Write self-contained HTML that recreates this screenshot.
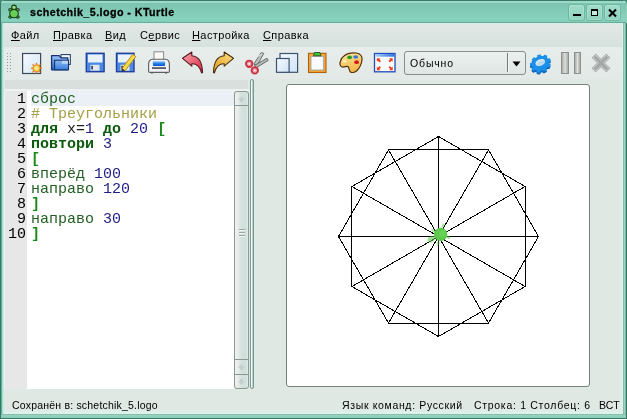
<!DOCTYPE html>
<html><head><meta charset="utf-8">
<style>
*{margin:0;padding:0;box-sizing:border-box}
html,body{width:627px;height:419px;overflow:hidden;background:#3f8673}
body{position:relative;font-family:"Liberation Sans",sans-serif;-webkit-font-smoothing:antialiased}
.abs{position:absolute}
.menu,.ttl,.code,.st,.tx{will-change:transform}
svg{position:absolute;overflow:visible}
#frame{left:0;top:0;width:627px;height:419px;background:linear-gradient(90deg,#3a7666 0,#3a7666 1px,#5cb09a 1px,#5cb09a 2px,#a6e2cf 2px,#a6e2cf 3px,#c4ecde 3px,#c4ecde 4px,transparent 4px),#8fd1bc;border-radius:5px 5px 0 0}
#title{left:1px;top:0;width:625px;height:23px;border-radius:4px 4px 0 0;background:linear-gradient(#3c7a6a 0,#3c7a6a 1px,#9dd9c7 1px,#9dd9c7 3px,#7dc4b0 3px,#80c8b4 8px,#88d3bf 20px,#84cfbb 20px,#84cfbb 22px,#6ea999 22px)}
#rb{left:619px;top:23px;width:8px;height:396px;background:linear-gradient(90deg,#e0e9e5 0,#dcf1ea 3px,#d8f5eb 3px,#d8f5eb 4px,#8fb9aa 4px,#8fb9aa 5px,#97d7c3 5px,#97d7c3 6px,#7ab9a5 6px,#7ab9a5 7px,#3a7262 7px)}
#bb{left:4px;top:410px;width:619px;height:4px;background:linear-gradient(#e0eae6 0,#dcf0e9 2px,#d8f5eb 3px,#d8f5eb 4px)}
#bb2{left:1px;top:414px;width:625px;height:5px;background:linear-gradient(#8fb9aa 0,#8fb9aa 1px,#94d6c2 1px,#88cbb6 4px,#3a7262 4px)}
#client{left:4px;top:23px;width:618px;height:390px;background:#e0e8e4}
.ttl{left:30px;top:6px;font-size:10.7px;font-weight:bold;color:#000;letter-spacing:0.45px;-webkit-text-stroke:0.3px #000;white-space:pre;line-height:12px}
.menu{top:29px;font-size:11px;color:#000;white-space:pre;letter-spacing:0.4px;line-height:12px}
.menu i{font-style:normal;text-decoration:underline;text-decoration-thickness:1px;text-underline-offset:0.5px}
.wbtn{top:4px;width:17px;height:17px;border:1px solid #70b7a1;border-radius:3px;background:linear-gradient(#a0dccb,#8ed3be);box-shadow:inset 0 0 0 1px rgba(255,255,255,0.18)}
.code{font-family:"Liberation Mono",monospace;font-size:15px;letter-spacing:0;white-space:pre;line-height:15px}
.ln{position:absolute;left:0;width:26px;text-align:right;color:#000}
.st{top:399px;font-size:10.5px;color:#000;white-space:pre;letter-spacing:0.2px;line-height:12px}
</style></head><body>
<div id="frame" class="abs"></div>
<div id="title" class="abs"></div>
<div id="client" class="abs"></div>
<div id="rb" class="abs"></div>
<div id="bb" class="abs"></div>
<div id="bb2" class="abs"></div>
<div class="abs" style="left:4px;top:23px;width:618px;height:24px;background:linear-gradient(#d2efe6 0,#d2efe6 1px,#e2e8e5 1px,#d6e1dd 24px)"></div>
<div class="abs" style="left:4px;top:47px;width:618px;height:32px;background:linear-gradient(#e6edea,#e2e9e6)"></div>
<!-- TITLE -->
<svg style="left:8px;top:4px" width="13" height="16" viewBox="0 0 13 16">
 <g fill="#5fc44e" stroke="#173f17" stroke-width="1.1">
  <ellipse cx="2.2" cy="5.8" rx="1.5" ry="1.2" fill="#a8e49a"/>
  <ellipse cx="9.8" cy="5.8" rx="1.5" ry="1.2" fill="#a8e49a"/>
  <ellipse cx="2.2" cy="13" rx="1.4" ry="1.1"/>
  <ellipse cx="9.8" cy="13" rx="1.4" ry="1.1"/>
  <circle cx="6" cy="3.4" r="2.3" fill="#9de08c"/>
  <ellipse cx="6" cy="9.6" rx="4.3" ry="4.2"/>
 </g>
 <ellipse cx="6" cy="9.8" rx="3.3" ry="3.2" fill="#66cf55"/>
</svg>
<div class="abs ttl">schetchik_5.logo - KTurtle</div>
<div class="abs wbtn" style="left:568px"></div>
<div class="abs wbtn" style="left:586px"></div>
<div class="abs wbtn" style="left:604px"></div>
<div class="abs" style="left:573px;top:14px;width:8px;height:2px;background:#000"></div>
<div class="abs" style="left:591px;top:9px;width:7px;height:7px;border:1px solid #000;border-top-width:2px;background:#c8e8dc"></div>
<svg style="left:608px;top:9px" width="9" height="8" viewBox="0 0 9 8"><path d="M1 0.5L8 7.5M8 0.5L1 7.5" stroke="#000" stroke-width="2.1"/></svg>
<!-- MENU -->
<div class="abs menu" style="left:11px"><i>Ф</i>айл</div>
<div class="abs menu" style="left:53px"><i>П</i>равка</div>
<div class="abs menu" style="left:105px"><i>В</i>ид</div>
<div class="abs menu" style="left:140px">С<i>е</i>рвис</div>
<div class="abs menu" style="left:192px"><i>Н</i>астройка</div>
<div class="abs menu" style="left:263px"><i>С</i>правка</div>
<!-- TOOLBAR -->
<svg style="left:6px;top:52px" width="6" height="21" viewBox="0 0 6 21" fill="#8e9a95">
 <rect x="1" y="1" width="1" height="1"/><rect x="4" y="1" width="1" height="1"/>
 <rect x="1" y="4" width="1" height="1"/><rect x="4" y="4" width="1" height="1"/>
 <rect x="1" y="7" width="1" height="1"/><rect x="4" y="7" width="1" height="1"/>
 <rect x="1" y="10" width="1" height="1"/><rect x="4" y="10" width="1" height="1"/>
 <rect x="1" y="13" width="1" height="1"/><rect x="4" y="13" width="1" height="1"/>
 <rect x="1" y="16" width="1" height="1"/><rect x="4" y="16" width="1" height="1"/>
 <rect x="1" y="19" width="1" height="1"/><rect x="4" y="19" width="1" height="1"/>
</svg>
<!-- new -->
<svg style="left:20px;top:50px" width="24" height="26" viewBox="0 0 24 26">
 <defs><linearGradient id="gpage" x1="0" y1="0" x2="1" y2="1"><stop offset="0" stop-color="#f8fbfe"/><stop offset="1" stop-color="#d2e4f4"/></linearGradient></defs>
 <rect x="2.6" y="3.5" width="18" height="20" fill="url(#gpage)" stroke="#3b4a5c" stroke-width="1.2"/>
 <g transform="translate(16.5 18.3)">
  <path d="M0,-5.5L1.2,-2.6L3.9,-3.9L2.8,-1.1L5.5,0L2.8,1.1L3.9,3.9L1.2,2.6L0,5.5L-1.2,2.6L-3.9,3.9L-2.8,1.1L-5.5,0L-2.8,-1.1L-3.9,-3.9L-1.2,-2.6Z" fill="#f0a020" stroke="#d86a10" stroke-width="0.6"/>
  <circle r="2.7" fill="#fcd85a"/>
  <circle r="1.3" fill="#fff2b0"/>
 </g>
</svg>
<!-- open -->
<svg style="left:50px;top:52px" width="22" height="20" viewBox="0 0 22 20">
 <defs><linearGradient id="gfold" x1="0" y1="0" x2="0" y2="1"><stop offset="0" stop-color="#9cc6f4"/><stop offset="1" stop-color="#2a62c8"/></linearGradient>
 <linearGradient id="gfold2" x1="0" y1="0" x2="0" y2="1"><stop offset="0" stop-color="#8ab8f0"/><stop offset="1" stop-color="#3a7ee0"/></linearGradient></defs>
 <rect x="11" y="2.6" width="9.3" height="9.8" fill="#f4f8fc" stroke="#1d3460" stroke-width="1"/>
 <path d="M1.6 3.6H9.2L11 5.8H17.8V17.8H1.6Z" fill="url(#gfold)" stroke="#163470" stroke-width="1.3" stroke-linejoin="round"/>
 <path d="M4.6 8.3H18.5V17.8H4.6Z" fill="url(#gfold2)" stroke="#163470" stroke-width="1.1"/>
 <rect x="12" y="8.8" width="6" height="3" fill="#c8dcf4" opacity="0.8"/>
</svg>
<!-- save -->
<svg style="left:84px;top:51px" width="22" height="22" viewBox="0 0 22 22">
 <rect x="2.3" y="2.3" width="17.8" height="18.4" fill="#4c8ae2" stroke="#213f9c" stroke-width="1.4"/>
 <rect x="4" y="3.5" width="14.5" height="8" fill="#e9f2fb"/>
 <rect x="6.5" y="13.8" width="9" height="5.8" fill="#e4e8ee"/>
 <rect x="7.3" y="14.8" width="1.6" height="3.6" fill="#2a3450"/>
</svg>
<!-- save as -->
<svg style="left:114px;top:51px" width="24" height="22" viewBox="0 0 24 22">
 <rect x="2.5" y="2.3" width="17.5" height="18.4" fill="#4c8ae2" stroke="#213f9c" stroke-width="1.4"/>
 <rect x="4" y="3.5" width="14.5" height="8" fill="#e9f2fb"/>
 <rect x="6.5" y="13.8" width="9" height="5.8" fill="#e4e8ee"/>
 <rect x="7.3" y="14.8" width="1.6" height="3.6" fill="#2a3450"/>
 <path d="M8 17.5L18.8 3.2L21.8 5.6L11 19.8Z" fill="#f2dc4a" stroke="#b88418" stroke-width="1"/>
 <path d="M8 17.5L7.3 20.5L11 19.8Z" fill="#2a3050"/>
</svg>
<!-- print -->
<svg style="left:146px;top:50px" width="26" height="26" viewBox="0 0 26 26">
 <defs><linearGradient id="gpb" x1="0" y1="0" x2="0" y2="1"><stop offset="0" stop-color="#8cc4fa"/><stop offset="0.45" stop-color="#2a86f0"/><stop offset="1" stop-color="#0a50c8"/></linearGradient></defs>
 <rect x="8" y="1.8" width="9.6" height="9.5" fill="#fbfbf6" stroke="#858a90" stroke-width="1"/>
 <path d="M6.5 9.3H19.5Q23.2 9.6 23.4 14V21Q23.4 22.4 22 22.4H4Q2.6 22.4 2.6 21V14Q2.8 9.6 6.5 9.3Z" fill="#f2f2f6" stroke="#5a5e64" stroke-width="1.1"/>
 <path d="M7 11.3H19Q19.5 14 18.8 16H7.2Q6.5 14 7 11.3Z" fill="url(#gpb)"/>
 <rect x="6" y="17.3" width="14" height="1.5" fill="#3a3e44"/>
 <rect x="5.3" y="22" width="1.3" height="1.8" fill="#5a5e64"/><rect x="19.4" y="22" width="1.3" height="1.8" fill="#5a5e64"/>
</svg>
<!-- undo -->
<svg style="left:181px;top:50px" width="24" height="25" viewBox="0 0 24 25">
 <defs><linearGradient id="gund" x1="0" y1="0" x2="1" y2="1"><stop offset="0" stop-color="#f7a8b0"/><stop offset="1" stop-color="#d8243a"/></linearGradient></defs>
 <path d="M1.5 8.3L10.8 2V5.8C17 6.3 21.3 12 21.5 22.5L20.7 23C19 17 15.5 13.5 10.8 13.8V16.2Z" fill="url(#gund)" stroke="#5a1a22" stroke-width="1.1" stroke-linejoin="round"/>
</svg>
<!-- redo -->
<svg style="left:211px;top:50px" width="24" height="25" viewBox="0 0 24 25">
 <defs><linearGradient id="gred" x1="1" y1="0" x2="0" y2="1"><stop offset="0" stop-color="#fbe08a"/><stop offset="1" stop-color="#e49a14"/></linearGradient></defs>
 <path d="M22.5 8.3L13.2 2V5.8C7 6.3 2.7 12 2.5 22.5L3.3 23C5 17 8.5 13.5 13.2 13.8V16.2Z" fill="url(#gred)" stroke="#4a3010" stroke-width="1.1" stroke-linejoin="round"/>
</svg>
<!-- cut -->
<svg style="left:244px;top:50px" width="26" height="25" viewBox="0 0 26 25">
 <path d="M9.8 14.2L17.2 2.6L19.8 3.4L13.2 15.2Z" fill="#bfc4c3" stroke="#5e6462" stroke-width="0.9" stroke-linejoin="round"/>
 <path d="M10.5 15.5L23 8.2L24.2 10.4L12.5 17.5Z" fill="#b4b9b8" stroke="#5e6462" stroke-width="0.9" stroke-linejoin="round"/>
 <path d="M14.2 6.5L18 3.8" stroke="#f4f6f6" stroke-width="0.8"/>
 <circle cx="5.2" cy="13.8" r="3.2" fill="#f0a0aa" stroke="#c83444" stroke-width="1.9"/>
 <circle cx="10.8" cy="20.4" r="3.2" fill="#f0a0aa" stroke="#c83444" stroke-width="1.9"/>
 <circle cx="5.2" cy="13.8" r="0.9" fill="#fff"/><circle cx="10.8" cy="20.4" r="0.9" fill="#fff"/>
</svg>
<!-- copy -->
<svg style="left:275px;top:51px" width="24" height="23" viewBox="0 0 24 23">
 <defs><linearGradient id="gcp" x1="0" y1="0" x2="1" y2="1"><stop offset="0" stop-color="#f5fafe"/><stop offset="1" stop-color="#cfe3f5"/></linearGradient></defs>
 <rect x="5" y="2.5" width="17.6" height="18.8" fill="url(#gcp)" stroke="#3d5372" stroke-width="1.2"/>
 <rect x="1.5" y="7.5" width="12.6" height="13.8" fill="url(#gcp)" stroke="#3d5372" stroke-width="1.2"/>
</svg>
<!-- paste -->
<svg style="left:306px;top:50px" width="22" height="25" viewBox="0 0 22 25">
 <rect x="2.5" y="3.3" width="17.5" height="19.2" fill="#f5a63a" stroke="#b0620e" stroke-width="1.1"/>
 <rect x="5" y="6.5" width="12.5" height="13.5" fill="#f8fafe" stroke="#9aa2aa" stroke-width="0.8"/>
 <path d="M7.5 5.8L8.5 2.5H14L15 5.8Z" fill="#44c044" stroke="#1c5a1c" stroke-width="0.9"/>
</svg>
<!-- palette -->
<svg style="left:338px;top:51px" width="26" height="24" viewBox="0 0 26 24">
 <defs><linearGradient id="gpal" x1="0" y1="0" x2="0.3" y2="1"><stop offset="0" stop-color="#fde7a0"/><stop offset="1" stop-color="#f2b848"/></linearGradient></defs>
 <path d="M6 5C9 2.5 14 1.5 18 2C22 2.5 24.5 5 24 9C23.5 13 21.5 17 19 19.5C17 21.5 14 22 12.5 21C11 20 11.5 17 10 15.5C8.5 14.8 6.5 16.5 4.2 16C1.8 15.3 1.5 12.5 2.5 10C3 8 4.5 6 6 5Z" fill="url(#gpal)" stroke="#56300c" stroke-width="1.2"/>
 <ellipse cx="11.6" cy="6.4" rx="2.5" ry="1.8" fill="#28a028"/>
 <ellipse cx="17.7" cy="6" rx="2.5" ry="1.8" fill="#3c78d0"/>
 <ellipse cx="18.6" cy="11.2" rx="2.4" ry="1.9" fill="#d81818"/>
 <ellipse cx="6.6" cy="10.2" rx="1.7" ry="1.3" fill="#fff0c0"/>
</svg>
<!-- fullscreen -->
<svg style="left:372px;top:51px" width="26" height="23" viewBox="0 0 26 23">
 <defs><linearGradient id="gfs" x1="0" y1="0" x2="1" y2="0"><stop offset="0" stop-color="#a8d0f8"/><stop offset="1" stop-color="#2a6ee0"/></linearGradient></defs>
 <rect x="2.5" y="2.5" width="20.5" height="18.3" fill="#fbfdff" stroke="#1e4cb8" stroke-width="1.3"/>
 <rect x="3.1" y="3.1" width="19.3" height="2.6" fill="url(#gfs)"/>
 <g fill="#e8401c"><path d="M4.80 7.20L8.40 7.20L7.32 8.28L8.98 9.94L7.54 11.38L5.88 9.72L4.80 10.80Z"/><path d="M20.70 7.20L17.10 7.20L18.18 8.28L16.52 9.94L17.96 11.38L19.62 9.72L20.70 10.80Z"/><path d="M4.80 19.20L8.40 19.20L7.32 18.12L8.98 16.46L7.54 15.02L5.88 16.68L4.80 15.60Z"/><path d="M20.70 19.20L17.10 19.20L18.18 18.12L16.52 16.46L17.96 15.02L19.62 16.68L20.70 15.60Z"/></g>
</svg>
<!-- combobox -->
<div class="abs" style="left:404px;top:51px;width:122px;height:24px;border:1px solid #858f8b;border-radius:3px;background:linear-gradient(#eaf0ed,#dfe6e3)"></div>
<div class="abs" style="left:507px;top:53px;width:1px;height:19px;background:#6f7a76"></div>
<div class="abs" style="left:508px;top:53px;width:1px;height:19px;background:#f4f8f6"></div>
<svg style="left:512px;top:61px" width="9" height="6" viewBox="0 0 9 6"><path d="M0.5 0.5H8.5L4.5 5.5Z" fill="#000"/></svg>
<div class="abs tx" style="left:410px;top:57px;font-size:10.5px;letter-spacing:0.85px;line-height:12px;white-space:pre">Обычно</div>
<!-- run gear -->
<svg style="left:528px;top:51px" width="25" height="25" viewBox="-12.5 -12.5 25 25">
 <g transform="translate(0 1.8) rotate(-22) scale(1 0.82)"><path fill="#0b64bc" stroke="#0b64bc" stroke-width="1.2" stroke-linejoin="round" d="M8.27,-1.46L10.11,-1.33L10.11,1.33L8.27,1.46L7.27,4.20L8.60,5.48L6.89,7.52L5.40,6.43L2.87,7.89L3.07,9.73L0.44,10.19L0.00,8.40L-2.87,7.89L-3.90,9.42L-6.21,8.09L-5.40,6.43L-7.27,4.20L-9.05,4.71L-9.96,2.21L-8.27,1.46L-8.27,-1.46L-9.96,-2.21L-9.05,-4.71L-7.27,-4.20L-5.40,-6.43L-6.21,-8.09L-3.90,-9.42L-2.87,-7.89L-0.00,-8.40L0.44,-10.19L3.07,-9.73L2.87,-7.89L5.40,-6.43L6.89,-7.52L8.60,-5.48L7.27,-4.20Z"/></g>
 <g transform="rotate(-22) scale(1 0.82)"><path fill="#1c90e8" stroke="#1c90e8" stroke-width="1.2" stroke-linejoin="round" d="M8.27,-1.46L10.11,-1.33L10.11,1.33L8.27,1.46L7.27,4.20L8.60,5.48L6.89,7.52L5.40,6.43L2.87,7.89L3.07,9.73L0.44,10.19L0.00,8.40L-2.87,7.89L-3.90,9.42L-6.21,8.09L-5.40,6.43L-7.27,4.20L-9.05,4.71L-9.96,2.21L-8.27,1.46L-8.27,-1.46L-9.96,-2.21L-9.05,-4.71L-7.27,-4.20L-5.40,-6.43L-6.21,-8.09L-3.90,-9.42L-2.87,-7.89L-0.00,-8.40L0.44,-10.19L3.07,-9.73L2.87,-7.89L5.40,-6.43L6.89,-7.52L8.60,-5.48L7.27,-4.20Z"/></g>
 <g transform="translate(-0.3 -1) rotate(-22) scale(1 0.82)"><ellipse cx="0" cy="0" rx="5" ry="3.9" fill="#d4e8f4"/><ellipse cx="0.6" cy="1" rx="4" ry="2.6" fill="#b8d8f0"/></g>
</svg>
<!-- pause -->
<div class="abs" style="left:561px;top:52px;width:8px;height:22px;border:1px solid #8c908e;background:linear-gradient(90deg,#a8aca9,#dcdfdc 50%,#a8aca9)"></div>
<div class="abs" style="left:574px;top:52px;width:7px;height:22px;border:1px solid #8c908e;background:linear-gradient(90deg,#a8aca9,#dcdfdc 50%,#a8aca9)"></div>
<!-- EDITOR -->
<div class="abs" style="left:5px;top:80px;width:243px;height:9px;background:#d8dfdc"></div>
<div class="abs" style="left:5px;top:89px;width:244px;height:2px;background:#eef3f1"></div>
<div class="abs" style="left:4px;top:91px;width:1px;height:298px;background:#eef3f1"></div><div class="abs" style="left:5px;top:91px;width:22px;height:298px;background:#e8e7e7"></div>
<div class="abs" style="left:27px;top:91px;width:207px;height:298px;background:#fff"></div>
<div class="abs" style="left:31px;top:91px;width:203px;height:15px;background:#ebf0f7"></div>
<div class="abs code" style="left:0;top:92px;width:26px"><div class="ln" style="top:0">1</div><div class="ln" style="top:15px">2</div><div class="ln" style="top:30px">3</div><div class="ln" style="top:45px">4</div><div class="ln" style="top:60px">5</div><div class="ln" style="top:75px">6</div><div class="ln" style="top:90px">7</div><div class="ln" style="top:105px">8</div><div class="ln" style="top:120px">9</div><div class="ln" style="top:135px">10</div></div>
<div class="abs code" style="left:31px;top:92px"><div style="color:#235f23">сброс</div><div style="color:#a59f45"># Треугольники</div><div><b style="color:#0c5a0c">для</b> <span style="color:#1e1e1e">x=</span><span style="color:#1e1e84">1</span> <b style="color:#0c5a0c">до</b> <span style="color:#1e1e84">20</span> <b style="color:#1a8a1a">[</b></div><div><b style="color:#0c5a0c">повтори</b> <span style="color:#1e1e84">3</span></div><div style="color:#1a8a1a;font-weight:bold">[</div><div><span style="color:#235f23">вперёд</span> <span style="color:#1e1e84">100</span></div><div><span style="color:#235f23">направо</span> <span style="color:#1e1e84">120</span></div><div style="color:#1a8a1a;font-weight:bold">]</div><div><span style="color:#235f23">направо</span> <span style="color:#1e1e84">30</span></div><div style="color:#1a8a1a;font-weight:bold">]</div></div>
<!-- scrollbar -->
<div class="abs" style="left:234px;top:91px;width:15px;height:298px;border:1px solid #8a9690;border-radius:3px;background:linear-gradient(90deg,#eef2f0 0,#e6ebe9 3px,#d6e2de 6px,#d0e0dc 9px,#d0e0dc 12px,#e8f8f4 13px)"></div>
<div class="abs" style="left:235px;top:105px;width:13px;height:1px;background:#8a9690"></div>
<div class="abs" style="left:235px;top:359px;width:13px;height:1px;background:#8a9690"></div>
<div class="abs" style="left:235px;top:374px;width:13px;height:1px;background:#8a9690"></div>
<svg style="left:237px;top:95px" width="9" height="8" viewBox="0 0 9 8"><path d="M4.5 1L8 5H6V7H3V5H1Z" fill="#c4d0cc"/></svg>
<svg style="left:237px;top:363px" width="9" height="8" viewBox="0 0 9 8"><path d="M4.5 1L8 5H6V7H3V5H1Z" fill="#c4d0cc"/></svg>
<svg style="left:237px;top:378px" width="9" height="8" viewBox="0 0 9 8"><path d="M4.5 7L8 3H6V1H3V3H1Z" fill="#c4d0cc"/></svg>
<div class="abs" style="left:239px;top:229px;width:6px;height:1px;background:#9aa5a0"></div><div class="abs" style="left:239px;top:230px;width:6px;height:1px;background:#f2f6f4"></div>
<div class="abs" style="left:239px;top:232px;width:6px;height:1px;background:#9aa5a0"></div><div class="abs" style="left:239px;top:233px;width:6px;height:1px;background:#f2f6f4"></div>
<div class="abs" style="left:239px;top:235px;width:6px;height:1px;background:#9aa5a0"></div><div class="abs" style="left:239px;top:236px;width:6px;height:1px;background:#f2f6f4"></div>
<!-- splitter -->
<div class="abs" style="left:250px;top:79px;width:4px;height:310px;border:1px solid #7a988f;border-radius:2px;background:linear-gradient(90deg,#f0fff8 50%,#b8d0c8 50%)"></div>
<!-- CANVAS -->
<div class="abs" style="left:286px;top:84px;width:304px;height:303px;background:#fff;border:1px solid #76807c;border-radius:3px"></div>
<svg style="left:0;top:0" width="627" height="419" shape-rendering="crispEdges"><path stroke="#000" stroke-width="1" fill="none" d="M438.5 236.5L438.5 136.5L525.1 186.5ZM438.5 236.5L488.5 149.9L538.5 236.5ZM438.5 236.5L525.1 186.5L525.1 286.5ZM438.5 236.5L538.5 236.5L488.5 323.1ZM438.5 236.5L525.1 286.5L438.5 336.5ZM438.5 236.5L488.5 323.1L388.5 323.1ZM438.5 236.5L438.5 336.5L351.9 286.5ZM438.5 236.5L388.5 323.1L338.5 236.5ZM438.5 236.5L351.9 286.5L351.9 186.5ZM438.5 236.5L338.5 236.5L388.5 149.9ZM438.5 236.5L351.9 186.5L438.5 136.5ZM438.5 236.5L388.5 149.9L488.5 149.9Z"/></svg>
<svg style="left:426px;top:222px" width="26" height="26" viewBox="0 0 26 26">
 <g fill="#5cc84c">
  <ellipse cx="5.2" cy="17.2" rx="3.8" ry="2.8" opacity="0.6" transform="rotate(-30 5.2 17.2)"/>
  <ellipse cx="17.2" cy="3.6" rx="1.4" ry="2.3" opacity="0.5" transform="rotate(30 17.2 3.6)"/>
  <ellipse cx="22.2" cy="15.2" rx="2.3" ry="1.4" opacity="0.5" transform="rotate(30 22.2 15.2)"/>
  <ellipse cx="7.4" cy="8.6" rx="2.3" ry="1.4" opacity="0.45" transform="rotate(30 7.4 8.6)"/>
  <ellipse cx="12.2" cy="21.4" rx="1.4" ry="2.3" opacity="0.45" transform="rotate(30 12.2 21.4)"/>
  <ellipse cx="14.6" cy="12.4" rx="6.7" ry="6.6"/>
 </g>
 <ellipse cx="16.5" cy="11.5" rx="3.5" ry="3.5" fill="#68d458" opacity="0.8"/>
</svg>
<!-- STATUS -->
<div class="abs st" style="left:12px">Сохранён в: schetchik_5.logo</div>
<div class="abs st" style="left:342px;letter-spacing:0.65px">Язык команд: Русский</div>
<div class="abs st" style="left:474px;letter-spacing:0.7px">Строка: 1 Столбец: 6</div>
<div class="abs st" style="left:599px">ВСТ</div>
<!-- stop -->
<svg style="left:590px;top:52px" width="22" height="22" viewBox="0 0 22 22">
 <path d="M1.80 5.70L5.70 1.80L11.00 7.10L16.30 1.80L20.20 5.70L14.90 11.00L20.20 16.30L16.30 20.20L11.00 14.90L5.70 20.20L1.80 16.30L7.10 11.00Z" fill="#8c908e"/>
 <path d="M2.60 5.70L5.70 2.60L11.00 7.90L16.30 2.60L19.40 5.70L14.10 11.00L19.40 16.30L16.30 19.40L11.00 14.10L5.70 19.40L2.60 16.30L7.90 11.00Z" fill="#dde1df"/>
 <path d="M3.40 5.60L5.60 3.40L11.00 8.80L16.40 3.40L18.60 5.60L13.20 11.00L18.60 16.40L16.40 18.60L11.00 13.20L5.60 18.60L3.40 16.40L8.80 11.00Z" fill="#a2a6a4"/>
</svg>
</body></html>
